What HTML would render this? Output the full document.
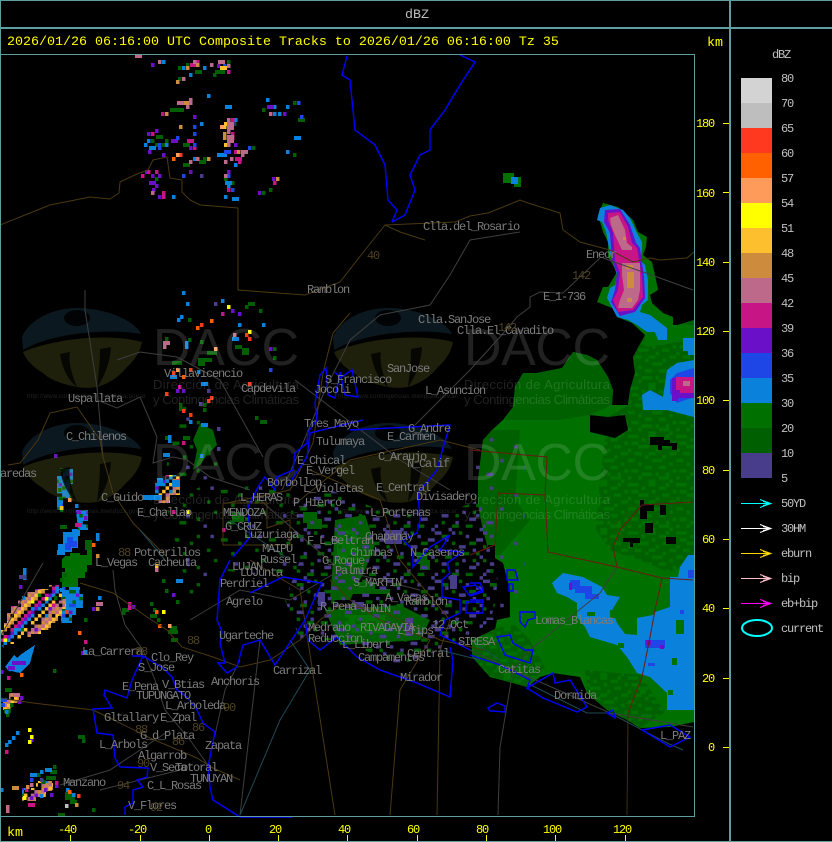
<!DOCTYPE html>
<html><head><meta charset="utf-8"><title>dBZ</title>
<style>
html,body{margin:0;padding:0;background:#000;width:832px;height:842px;overflow:hidden}
svg{display:block}
text{font-family:"Liberation Mono",monospace;font-size:12px;letter-spacing:-1.2px}
.m text{fill:#7c7c7c}
.n text{fill:#4f4220}
.y text{fill:#ffff00}
.s text{fill:#c0c0c0}
.w text{font-family:"Liberation Sans",sans-serif;letter-spacing:0;fill:#fff;fill-opacity:.13}
.c path{fill:none;stroke-width:4}
.l path{fill:none}
</style></head><body>
<svg width="832" height="842" viewBox="0 0 832 842" xmlns="http://www.w3.org/2000/svg">
<defs>
<pattern id="sp" width="14" height="14" patternUnits="userSpaceOnUse" patternTransform="scale(3.45)">
<path fill="none" stroke="#483d8b" d="M0 .5h2M5 .5h1M9 1.5h1M3 2.5h1M12 2.5h2M7 4.5h2M1 5.5h1M11 5.5h1M4 6.5h1M13 7.5h1M8 8.5h1M2 9.5h2M10 10.5h2M6 11.5h1M0 12.5h1M4 13.5h1M13 13.5h1"/>
<path fill="none" stroke="#005f00" d="M2 1.5h2M7 .5h1M10 3.5h2M5 3.5h1M0 4.5h1M8 6.5h2M12 6.5h1M3 7.5h2M6 9.5h1M11 8.5h1M0 8.5h1M9 12.5h2M2 11.5h1M5 12.5h2"/>
</pattern>
<pattern id="gs" width="14" height="14" patternUnits="userSpaceOnUse" patternTransform="scale(3.45)">
<path fill="none" stroke="#005f00" d="M1 1.5h1M8 2.5h2M4 5.5h1M11 6.5h1M6 8.5h1M1 10.5h1M10 11.5h2M13 3.5h1"/>
<path fill="none" stroke="#483d8b" d="M5 1.5h1M12 9.5h1M3 12.5h1"/>
</pattern>
<pattern id="g1" width="14" height="14" patternUnits="userSpaceOnUse" patternTransform="scale(3.45)">
<path fill="none" stroke="#007000" d="M0 .5h3M6 .5h2M11 .5h1M4 1.5h1M9 1.5h2M1 2.5h2M7 2.5h1M13 2.5h1M3 3.5h3M10 3.5h2M0 4.5h1M8 4.5h1M2 5.5h2M6 5.5h2M12 5.5h2M5 6.5h1M10 6.5h1M0 7.5h2M7 7.5h3M3 8.5h1M12 8.5h1M5 9.5h2M9 9.5h2M1 10.5h2M13 10.5h1M4 11.5h3M8 11.5h1M11 11.5h1M0 12.5h1M3 12.5h1M9 12.5h3M6 13.5h2M12 13.5h1"/>
</pattern>
<pattern id="pu" width="14" height="14" patternUnits="userSpaceOnUse" patternTransform="scale(3.45)">
<path fill="none" stroke="#483d8b" d="M2 1.5h1M9 3.5h1M5 7.5h1M12 9.5h1M1 11.5h2"/>
</pattern>
<pattern id="mix" width="12" height="12" patternUnits="userSpaceOnUse" patternTransform="scale(3.45)">
<g fill="none" shape-rendering="crispEdges">
<path stroke="#cd8b3e" d="M0 .5h1M1 11.5h1M2 10.5h1M3 9.5h1M4 8.5h1M5 7.5h1M6 6.5h1M7 5.5h1M8 4.5h1M9 3.5h1M10 2.5h1M11 1.5h1M0 3.5h1M1 2.5h1M2 1.5h1M3 .5h1M4 11.5h1M5 10.5h1M6 9.5h1M7 8.5h1M8 7.5h1M9 6.5h1M10 5.5h1M11 4.5h1"/>
<path stroke="#bd698a" d="M0 1.5h1M1 .5h1M2 11.5h1M3 10.5h1M4 9.5h1M5 8.5h1M6 7.5h1M7 6.5h1M8 5.5h1M9 4.5h1M10 3.5h1M11 2.5h1M0 11.5h1M1 10.5h1M2 9.5h1M3 8.5h1M4 7.5h1M5 6.5h1M6 5.5h1M7 4.5h1M8 3.5h1M9 2.5h1M10 1.5h1M11 .5h1"/>
<path stroke="#fdbf2d" d="M0 2.5h1M1 1.5h1M2 .5h1M3 11.5h1M4 10.5h1M5 9.5h1M6 8.5h1M7 7.5h1M8 6.5h1M9 5.5h1M10 4.5h1M11 3.5h1M0 9.5h1M1 8.5h1M2 7.5h1M3 6.5h1M4 5.5h1M5 4.5h1M6 3.5h1M7 2.5h1M8 1.5h1M9 .5h1M10 11.5h1M11 10.5h1"/>
<path stroke="#c71585" d="M0 5.5h1M1 4.5h1M2 3.5h1M3 2.5h1M4 1.5h1M5 .5h1M6 11.5h1M7 10.5h1M8 9.5h1M9 8.5h1M10 7.5h1M11 6.5h1M3 7.5h1M8 10.5h1"/>
<path stroke="#6a10c8" d="M0 6.5h1M1 5.5h1M2 4.5h1M3 3.5h1M4 2.5h1M5 1.5h1M6 .5h1M7 11.5h1M8 10.5h1M9 9.5h1M10 8.5h1M11 7.5h1M10 2.5h1M2 8.5h1"/>
<path stroke="#0a82dc" d="M0 7.5h1M1 6.5h1M2 5.5h1M3 4.5h1M4 3.5h1M5 2.5h1M6 1.5h1M7 .5h1M8 11.5h1M9 10.5h1M10 9.5h1M11 8.5h1M4 2.5h1M9 8.500h1M1 10.5h1"/>
<path stroke="#000" d="M2 3.5h1M8 1.5h1M5 7.5h1M10 9.5h1M3 10.5h1M7 4.5h1M0 6.5h1M11 .5h1M4 5.5h1"/>
<path stroke="#ffff00" d="M1 5.5h1M9 6.5h1"/>
<path stroke="#007000" d="M6 2.5h1M11 4.5h1"/>
</g>
</pattern>
<pattern id="bg" width="8" height="8" patternUnits="userSpaceOnUse" patternTransform="scale(3.45)">
<rect width="8" height="8" fill="#0a82dc"/>
<path fill="none" stroke="#005f00" d="M1 .5h2M6 1.500h1M0 3.500h1M4 3.500h2M2 5.500h1M7 5.500h1M5 6.500h1"/>
<path fill="none" stroke="#6a10c8" d="M4 1.500h1M1 4.500h1M6 4.500h1"/>
<path fill="none" stroke="#000" d="M3 2.500h1M7 3.500h1M0 7.500h2"/>
<path fill="none" stroke="#1e46e6" d="M2 2.500h1M4 7.500h2"/>
</pattern>
<g id="logo">
<path fill="#3c78a0" fill-opacity=".2" d="M22 337C30 318 55 308 77 308C108 308 136 322 141 334C115 329 55 331 23 350Z"/>
<path fill="#96a03c" fill-opacity=".2" d="M23 352C50 340 105 332 142 342C140 352 135 360 127 367C118 378 108 384 97 387C90 388 84 388 77 387C62 384 50 380 43 373C33 367 26 360 23 352Z"/>
<ellipse cx="77" cy="318" rx="13" ry="8" fill="#000" fill-opacity=".85"/>
<path fill="#000" fill-opacity=".8" d="M60 354C62 368 68 380 77 387C72 375 68 362 70 352ZM100 349C100 365 98 378 97 387C105 376 110 362 111 347Z"/>
</g>
</defs>
<rect width="832" height="842" fill="#000"/>

<!-- radar big shapes -->
<g>
<path fill="#007000" d="M645 335L694 320V722L670 727L640 728L627 720L607 710L587 693L580 677L553 673L540 677L527 687L513 683L490 677L472 657V640L495 630L497 620L510 617L510 590L503 563L490 555L483 530L478 505L478 480L483 440L492 430L503 420L513 407L515 387L523 373L537 373L562 368L573 352L587 355L597 360L608 377L613 390L612 405L628 405L630 390L635 373L633 357Z"/>
<path fill="#006000" d="M523 373L537 373L562 368L573 352L587 355L597 360L608 377L613 390L612 405L590 415L560 420L505 420L513 407L515 387Z"/>
<path fill="#006000" d="M645 335L694 320V562L668 572L640 560L610 550L596 530L600 480L608 417L628 405L630 390L635 373L633 357Z"/>
<path fill="url(#g1)" d="M645 335L694 320V562L668 572L640 560L610 550L596 530L600 480L608 417L628 405L630 390L635 373L633 357Z"/>
<path fill="#006000" d="M472 640L497 628L515 625L530 640L545 668L527 687L513 683L490 677L472 657Z"/>
<path fill="url(#g1)" d="M472 640L497 628L515 625L530 640L545 668L527 687L513 683L490 677L472 657Z"/>
<path fill="#006000" d="M585 670L640 675L665 712L640 728L627 720L607 710L587 693Z"/>
<path fill="url(#g1)" d="M585 670L640 675L665 712L640 728L627 720L607 710L587 693Z"/>
<path fill="#006000" d="M483 440L492 430L520 430L515 500L530 520L500 555L490 555L483 530L478 505L478 480Z"/>
<path fill="url(#pu)" d="M470 430H525V620H470Z"/>
<!-- holes -->
<path fill="#000" d="M608 417L625 415L628 430L615 438L590 432L590 415ZM650 437h14v3h6v3h7v7h-5v-4h-10v4h-4v-5h-8ZM640 500h4v4h10v7h-7v8h-7ZM645 523h8v10h-8ZM623 538h17v5h-7v4h-3v-5h-7ZM666 537h10v7h-10ZM660 505h6v10h-6ZM488 545h7v14h-7Z"/>
<!-- north storm -->
<path fill="#007000" d="M603 203L618 207L627 215L633 220L638 232L647 237L646 247L643 255L652 262L655 275L658 290L650 295L652 303L663 313L673 317L673 325L694 325V340L645 347L645 335L632 323L617 317L617 310L597 302L603 287L608 287L617 272L608 257L608 242L603 232L598 215Z"/>
<path fill="#0a82dc" d="M600 208L610 205L623 210L630 218L637 233L642 242L642 250L640 260L645 265L648 280L648 300L642 305L640 312L650 315L667 328L667 340L658 340L655 332L647 332L637 325L628 320L617 317L607 298L610 288L615 285L617 275L611 257L608 243L606 232L602 222L597 220Z"/>
<path fill="#6a10c8" d="M605 210L620 209L630 225L636 243L640 248L644 277L645 298L635 312L620 316L611 302L615 290L617 273L612 260L610 233L604 222Z"/>
<path fill="#c71585" d="M608 213L620 212L628 227L632 243L637 248L642 277L643 297L633 310L618 312L613 300L618 290L620 273L615 260L613 233L608 220Z"/>
<path fill="#bd698a" d="M610 218L618 215L625 230L627 243L632 247L632 250L622 250L615 235L611 225ZM622 263L640 263L640 290L638 300L632 308L618 308L620 300L624 290L622 275Z"/>
<path fill="#cd8b3e" d="M626 265h7v4h-7ZM627 272h7v16h-7ZM627 298h5v4h-5ZM623 237h3v3h-3Z"/>
<path fill="#0a82dc" d="M642 395L650 390L663 397L667 370L677 363L694 360V417L667 410L643 410ZM683 338h11v17h-6v-4h-5Z"/>
<path fill="#1e46e6" d="M670 380L677 373L694 368V397L677 403L670 393Z"/>
<path fill="#6a10c8" d="M672 378h22v20h-16v3h-6Z"/>
<path fill="#c71585" d="M676 377h18v16h-14v-3h-4Z"/>
<path fill="#bd698a" d="M683 381h7v5h-7Z"/>
<!-- south blue -->
<path fill="#0a82dc" d="M552 583L563 573L583 577L602 587L607 595L620 597L612 610L617 623L625 634L637 635L637 618L653 615L655 612L670 607V577H678L680 567L688 555H694V710H667V693L650 677L637 673L627 657L617 645L600 640L590 637L585 627L577 617V603L567 597L557 593Z"/>
<path fill="#007000" d="M610 610h7v8h-7ZM676 620h8v14h-8ZM672 658h5v7h-5ZM618 643h6v5h-6ZM587 612h8v4h-8ZM668 690h5v5h-5ZM640 690h6v4h-6Z"/>
<path fill="#1e46e6" d="M570 580h10v6h12v8h7v5h-14v-6h-10v-4h-5ZM645 640h20v8h-20ZM688 570h6v8h-6ZM680 610h4v4h-4ZM648 663h7v3h-7Z"/>
<path fill="#6a10c8" d="M569 583h3v7h-3ZM646 640h5v5h-5ZM660 645h4v4h-4Z"/>
<path fill="#007000" d="M503 173h11v4h7v10h-7v-4h-11Z"/>
<path fill="#0a82dc" d="M511 177h7v7h-7Z"/>
</g>

<!-- central speckle -->
<path fill="url(#gs)" d="M165 500L220 480L290 490L300 580L220 570L190 600L180 560Z"/>
<path fill="url(#gs)" d="M170 400L215 420L225 470L165 500Z"/>
<path fill="#005f00" d="M335 520L365 515L375 545L365 570L350 600L330 600L333 560ZM325 610L400 605L430 620L420 640L340 645ZM303 512h14v7h5v10h-15v-6h-4ZM417 553h10v7h3v10h-10v-6h-3ZM200 424L213 430L217 445L207 455L200 465L193 470L197 450L193 440ZM232 512h12v10h-12ZM345 582h30v7h15v5h-45Z"/>
<path fill="#007000" d="M337 530h20v30h-20ZM345 615h40v18h-40Z"/>
<path fill="url(#sp)" d="M290 505L330 490L380 510L440 515L480 500L500 590L490 620L470 640L440 650L400 665L340 640L300 640L285 600L300 560Z"/>
<path fill="#483d8b" d="M385 530h17v14h-17ZM354 602h10v7h-10ZM405 618h8v18h-8ZM450 575h7v14h-7ZM318 592h7v14h-7ZM345 605h7v3h-7Z"/>

<!-- mixed storms -->
<g shape-rendering="crispEdges">
<path fill="url(#bg)" d="M62 587h18v7h3v14h-7v7h-4v8h-11Z"/>
<path fill="url(#mix)" d="M0 637v-7h4v-7h3v-10h4v-7h7v-7h7v-7h10v-3h14v-4h10v4h3v10h4v10h-4v7h-4v7h-7v7h-10v4h-10v3h-10v3h-7v4h-7v4h-4Z"/>
<path fill="url(#mix)" d="M155 480h10v-5h15v20h-10v8h-20v-8h5Z"/>
<path fill="#0a82dc" d="M143 495H162V500H143ZM157 478h6v8h-6ZM172 480h8v7h-8ZM7 670L20 655L35 645L30 663L20 673ZM5 667L14 655L20 660L10 672Z"/>
<path fill="url(#bg)" d="M57 476h6v-7h10v15h-3v14h-7v12h-6Z"/>
<path fill="#0a82dc" d="M63 532h9v-3h8v7h-2v12h-6v4h-7v3h-8v-5h1v-6h5Z"/>
<path fill="#1e46e6" d="M67 537h6v4h4v6h-6v3h-6v-7h2Z"/>
<path fill="url(#bg)" d="M76 510H88V530H78Z"/>
<path fill="#007000" d="M65 556h5v-3h10v2h7v-5h5v15h-5v7h-2v6h-7v9h-16v-15h3v-4h-3v-9Z"/>
<path fill="#005f00" d="M85 540h7v10h-7ZM60 525h7v4h-7Z"/>
<path fill="url(#mix)" d="M22 788h14v-7h17v10h-7v6h-10v4h-14ZM3 700h6v-7h10v10h-7v7h-9Z"/>
</g>

<!-- scattered cells -->
<g class="c" shape-rendering="crispEdges">
<path stroke="#005f00" d="M227 62h3.5M186 65h3.5M178 68h3.5M195 72h7M215 72h10M213 75h3.5M178 79h3.5M170 110h14M293 103h3.5M262 110h3.5M298 120h7M233 124h3.5M156 137h7M151 141h3.5M165 141h3.5M155 145h3.5M162 145h3.5M183 145h7M252 148h3.5M293 155h3.5M183 165h7M199 162h7M203 159h3.5M155 179h3.5M224 179h3.5M231 183h3.5M269 190h3.5M262 193h3.5M188 320h3.5M248 304h7M245 307h3.5M259 311h3.5M165 339h3.5M188 340h3.5M242 350h7M242 353h7M235 347h7M207 353h10M200 342h3.5M273 358h3.5M273 349h3.5M172 363h10M198 360h14M198 364h7M179 405h3.5M179 409h3.5M203 405h3.5M203 410h3.5M255 418h3.5M260 422h7M183 438h7M165 438h3.5M203 437h3.5M60 470h3.5M64 480h3.5M58 490h3.5M70 495h3.5M60 510h3.5M54 598h3.5M84 620h3.5M170 628h7M168 632h10M171 640h7M150 604h3.5M153 610h3.5M150 616h7M157 620h3.5M165 591h3.5M176 602h3.5M162 581h3.5M53 671h3.5M122 610h7M122 613h3.5M78 737h7M82 741h3.5M6 715h3.5M4 711h7M10 705h3.5M5 690h7M53 767h3.5M50 772h7M37 775h3.5M46 778h10M42 782h3.5M65 794h7M65 798h10M70 802h7M58 815h7M92 810h3.5M60 580h3.5M63 575h3.5"/>
<path stroke="#0a82dc" d="M162 62h3.5M182 68h3.5M203 68h3.5M189 75h3.5M207 96h3.5M266 100h3.5M225 107h7M273 107h3.5M286 107h3.5M273 114h3.5M278 114h3.5M234 120h3.5M200 124h3.5M294 138h7M147 141h3.5M144 145h3.5M149 148h7M165 145h3.5M217 155h10M286 152h3.5M234 165h3.5M193 159h3.5M225 183h7M227 187h3.5M224 197h3.5M232 199h7M172 197h3.5M177 320h3.5M180 317h3.5M221 301h3.5M238 325h3.5M262 325h3.5M232 339h7M185 343h3.5M185 347h3.5M201 384h7M197 372h3.5M170 377h7M168 437h3.5M168 441h3.5M189 422h3.5M201 425h7M163 455h7M200 456h3.5M182 293h3.5M186 304h3.5M75 506h3.5M98 598h3.5M176 581h7M84 652h3.5M60 590h3.5M22 598h3.5M5 712h3.5M5 745h3.5M8 742h3.5M12 738h3.5M16 733h3.5M30 775h7M40 796h3.5M66 790h3.5M72 795h3.5M40 772h3.5M45 770h7M0 790h3.5M96 535h3.5M96 539h3.5M23 570h3.5M23 574h3.5M23 578h3.5"/>
<path stroke="#6a10c8" d="M151 65h3.5M217 66h3.5M193 117h3.5M231 124h3.5M155 131h3.5M147 134h3.5M171 141h7M234 145h3.5M189 148h3.5M148 152h3.5M162 155h3.5M145 172h3.5M151 176h3.5M158 176h3.5M189 172h3.5M227 172h3.5M149 183h7M155 186h3.5M152 190h3.5M158 197h3.5M258 193h3.5M272 179h3.5M267 107h7M283 114h3.5M231 311h3.5M238 314h3.5M269 349h3.5M182 391h3.5M176 391h3.5M54 456h3.5M172 595h3.5M92 609h3.5M132 607h3.5M81 653h3.5M78 512h3.5M84 518h3.5M12 663h14M8 668h7M0 672h3.5M18 702h3.5M20 698h3.5M30 740h3.5M50 795h3.5M44 790h3.5M30 798h3.5M55 786h3.5M19 587h3.5"/>
<path stroke="#c71585" d="M190 65h7M196 62h3.5M227 72h3.5M161 114h3.5M187 141h7M231 120h3.5M231 134h3.5M231 138h3.5M151 134h3.5M193 148h3.5M234 152h3.5M235 159h7M238 162h3.5M147 172h3.5M155 172h3.5M141 176h3.5M162 193h3.5M162 197h3.5M227 190h3.5M273 183h3.5M221 314h3.5M178 387h3.5M182 443h3.5M172 512h3.5M128 604h3.5M128 608h3.5M84 642h3.5M75 525h7M222 530h3.5M7 678h3.5M5 752h3.5M28 805h7M55 783h3.5M25 790h3.5"/>
<path stroke="#1e46e6" d="M223 66h3.5M297 103h3.5M300 117h3.5M193 127h3.5M193 134h3.5M176 138h3.5M158 145h3.5M158 148h3.5M193 145h3.5M248 148h3.5M224 152h7M182 176h3.5M227 176h3.5M231 190h3.5M269 370h3.5M0 700h7M0 705h5M30 780h3.5"/>
<path stroke="#cd8b3e" d="M176 82h3.5M196 65h3.5M186 68h3.5M183 103h7M165 114h3.5M179 127h3.5M223 134h3.5M223 138h3.5M237 152h3.5M207 159h3.5M276 179h3.5M96 609h3.5M75 805h3.5M12 788h7M26 787h3.5M96 556h3.5"/>
<path stroke="#fdbf2d" d="M220 68h7M224 124h3.5M224 145h3.5M223 127h3.5M60 508h3.5M155 566h3.5"/>
<path stroke="#ffff00" d="M227 307h3.5M248 332h3.5M186 512h3.5M162 612h3.5M28 742h3.5M30 737h3.5M28 730h3.5M23 798h3.5"/>
<path stroke="#bd698a" d="M135 56h7M158 62h3.5M193 62h3.5M218 62h7M210 65h3.5M227 66h3.5M182 79h3.5M177 103h7M189 100h3.5M189 103h3.5M186 107h3.5M269 114h3.5M227 120h3.5M227 124h7M227 128h7M227 132h3.5M227 137h7M227 141h7M227 145h3.5M241 152h7M241 155h3.5M196 159h3.5M189 162h3.5M224 162h3.5M230 159h3.5M224 176h3.5M151 193h3.5M163 343h7M163 347h3.5M233 335h3.5M96 604h7M13 695h7M6 811h3.5M6 807h3.5M30 785h3.5M155 570h3.5"/>
<path stroke="#ff3820" d="M179 155h3.5M200 325h3.5M196 328h3.5M248 339h3.5M245 335h3.5M165 394h3.5M207 401h3.5M210 398h3.5M182 411h3.5M189 415h3.5M248 384h3.5M189 370h3.5M172 373h3.5M77 796h3.5M65 612h3.5"/>
<path stroke="#ff6000" d="M172 159h3.5M210 321h3.5M196 328h3.5M78 633h3.5M20 675h3.5M92 545h3.5M68 792h3.5M155 612h3.5M158 626h3.5M182 377h3.5"/>
<path stroke="#ff9c5c" d="M176 155h3.5M220 127h3.5M214 349h3.5M176 370h3.5M168 626h3.5M68 500h3.5"/>
<path stroke="#483d8b" d="M214 304h3.5M207 391h3.5M199 404h3.5M217 429h3.5M217 449h3.5M200 176h3.5M186 560h3.5M40 780h3.5M19 577h7"/>
<path stroke="#bebebe" d="M65 806h3.5"/>
</g>

<!-- watermarks -->
<use href="#logo"/><use href="#logo" x="0" y="115"/><use href="#logo" x="311"/><use href="#logo" x="311" y="115"/>
<g class="w">
<text x="153" y="365" style="font-size:52px" textLength="146">DACC</text>
<text x="153" y="480" style="font-size:52px" textLength="146">DACC</text>
<text x="464" y="365" style="font-size:52px" textLength="146">DACC</text>
<text x="464" y="480" style="font-size:52px" textLength="146">DACC</text>
<text x="153" y="389" style="font-size:13px" textLength="146">Dirección de Agricultura</text>
<text x="153" y="404" style="font-size:13px" textLength="146">y Contingencias Climáticas</text>
<text x="153" y="504" style="font-size:13px" textLength="146">Dirección de Agricultura</text>
<text x="153" y="519" style="font-size:13px" textLength="146">y Contingencias Climáticas</text>
<text x="464" y="389" style="font-size:13px" textLength="146">Dirección de Agricultura</text>
<text x="464" y="404" style="font-size:13px" textLength="146">y Contingencias Climáticas</text>
<text x="464" y="504" style="font-size:13px" textLength="146">Dirección de Agricultura</text>
<text x="464" y="519" style="font-size:13px" textLength="146">y Contingencias Climáticas</text>
<text x="27" y="398" style="font-size:6px" textLength="119">http://www.contingencias.mendoza.gov.ar</text>
<text x="27" y="513" style="font-size:6px" textLength="119">http://www.contingencias.mendoza.gov.ar</text>
<text x="338" y="398" style="font-size:6px" textLength="119">http://www.contingencias.mendoza.gov.ar</text>
<text x="338" y="513" style="font-size:6px" textLength="119">http://www.contingencias.mendoza.gov.ar</text>
</g>

<!-- map lines -->
<g class="l">
<g stroke="#3e3e3e" stroke-width="1">
<path d="M600 258L563 293L540 292L530 297L530 307L517 317L500 337L470 370L440 400L415 425"/>
<path d="M603 258L657 277L693 290"/>
<path d="M600 593L530 650L513 670L500 747L498 815"/>
<path d="M617 567L600 593M470 650L513 670L610 713L693 727"/>
<path d="M520 232L470 240L450 275L430 305L380 315L350 340L325 390L300 450L282 490"/>
<path d="M85 290V310L97 387L103 457M117 360L140 352L177 357L220 380L263 457M97 400L117 408L140 397L157 437L153 463L173 457L187 460L210 477L250 490"/>
<path d="M0 637L43 563M113 570L115 590L125 625L143 650L155 680L165 710L190 740L210 768M215 735L225 690L240 660"/>
<path d="M295 380L400 460L450 490M260 500L340 570L420 590M190 620L240 590L290 600L340 570M260 640L240 815M170 730L110 770L60 785M180 770L100 790"/>
</g>
<g stroke="#4a3810" stroke-width="1">
<path d="M0 225L50 205L90 197L110 199L119 193L120 182L137 174L148 170L153 160L167 157L170 178L182 180L182 192L190 200L200 205L238 208V290L305 295L340 282L365 250L385 225L455 222L470 216L488 213L503 207L520 200L528 203L560 213L563 230L580 242L610 250L633 262L650 258L660 260L687 258L694 252"/>
<path d="M350 313L333 333L323 373L313 443L300 470L290 490L227 503"/>
<path d="M77 407L50 413L38 440L20 463L8 465M77 407L100 440L103 457L113 493L133 523L153 543L167 557"/>
<path d="M0 698L33 703L93 710L110 718L150 738L197 758L213 768L240 780"/>
<path d="M80 583L113 593L147 617L167 630L182 647L213 657L240 667L270 660L300 640L320 620L340 605L380 610L440 640L485 650"/>
<path d="M385 225L400 232L425 240M310 470L380 500L400 560L450 620L440 650L437 815"/>
<path d="M223 503H267V528L290 520V545H223V503ZM300 500L350 460L440 440L480 450"/>
<path d="M330 580L350 600L380 620L430 640L400 690L390 815M250 560L300 590L335 815"/>
</g>
<g stroke="#6a1a10" stroke-width="1">
<path d="M470 450L547 457L545 495L498 493L495 545L470 555M545 495L548 552L617 567L662 578L693 580M642 505L620 530L613 547L617 567M693 502L642 505M662 578L655 610L650 637L642 677L628 713"/>
</g>
<path stroke="#3d3008" d="M628 713L627 815"/>
<g stroke="#1f4a55" stroke-width="1">
<path d="M527 683L587 713L610 713L667 743L683 750M230 520L260 540L290 560M140 530L165 560M290 640L310 670L280 720L240 815M470 640L500 660M440 650L480 660"/>
</g>
<g stroke="#0000ff" stroke-width="1.4">
<path d="M347 56L342 75L350 80L355 130L375 145L385 165L388 200L397 210L392 222"/>
<path d="M460 55L475 62L460 85L445 110L430 130L430 150L420 155L410 175L415 190L405 215L392 222"/>
<path d="M315 403L317 420L308 432L307 443L295 453L293 470L277 477L275 490L265 477L258 487L248 507L250 537L233 557"/>
<path d="M315 403L320 375L326 368L328 395L335 398L340 372L345 395L358 397L352 370L340 378L335 372"/>
<path d="M132 656H143L132 680L127 698L105 690L104 695L112 708L93 709L97 733L113 735L115 758L120 767L148 768L147 777L137 780L143 787L133 790L133 803L125 807L125 815"/>
<path d="M143 656L163 668L172 677L177 690L187 697L197 710L203 723L215 732L208 767L210 787L213 800L240 817L292 817"/>
<path d="M230 560L220 580L217 620L222 632L220 643L225 663L218 663L227 673L237 667L243 645L260 640L275 665L305 620"/>
<path d="M250 593L283 577L322 583L313 602L305 620L308 640L320 650L337 637L357 657L380 670L417 683L450 697L453 660L450 647"/>
<path d="M363 420L310 433L307 457L287 487M350 430L450 425L443 448L437 470L418 493L420 520L417 533L403 540L413 550V567L430 547L450 535L440 550L463 552L447 563L450 573L442 580V597L460 600V613L445 620L440 635L470 650"/>
<path d="M470 583H480L483 590L470 595M470 600H483V613H470M507 570H515L518 580H507ZM509 584H513V591H509ZM520 612H535V618L528 620L525 627L520 622ZM497 637L510 635L513 643L525 650L533 650L530 663L505 655ZM466 602H483V613H466ZM463 587L475 585L483 592L470 596Z"/>
<path d="M470 655L500 665L530 680L527 688L553 673L555 683L570 680L587 707L577 712L543 698L527 688M642 730L670 725L690 737L670 747ZM488 708L497 703L505 706V712L490 711ZM607 713L613 710L615 718Z"/>
</g>
</g>

<!-- labels -->
<g class="m">
<text x="423" y="230">Clla.del_Rosario</text><text x="586" y="258">Eneor</text><text x="543" y="300">E_1-736</text><text x="307" y="293">Ramblon</text>
<text x="418" y="323">Clla.SanJose</text><text x="457" y="334">Clla.El_Cavadito</text><text x="164" y="377">Villavicencio</text><text x="241" y="392">Capdevila</text>
<text x="325" y="383">S_Francisco</text><text x="387" y="372">SanJose</text><text x="425" y="394">L_Asuncion</text><text x="314" y="393">Jocoli</text>
<text x="68" y="402">Uspallata</text><text x="304" y="427">Tres_Mayo</text><text x="316" y="445">Tulumaya</text><text x="408" y="432">G_Andre</text>
<text x="387" y="440">E_Carmen</text><text x="378" y="460">C_Araujo</text><text x="407" y="467">N_Calif</text><text x="297" y="464">E_Chical</text>
<text x="306" y="474">E_Vergel</text><text x="267" y="486">Borbollon</text><text x="376" y="491">E_Central</text><text x="416" y="500">Divisadero</text>
<text x="303" y="492">L_Violetas</text><text x="240" y="501">L_HERAS</text><text x="293" y="506">P_Hierro</text><text x="66" y="440">C_Chilenos</text>
<text x="0" y="477">aredas</text><text x="101" y="501">C_Guido</text><text x="137" y="516">E_Challao</text><text x="223" y="516">MENDOZA</text>
<text x="225" y="530">G_CRUZ</text><text x="244" y="538">Luzuriaga</text><text x="370" y="516">L_Portenas</text><text x="365" y="540">Chapanay</text>
<text x="307" y="544">F_L_Beltran</text><text x="350" y="556">Chimbas</text><text x="410" y="556">N_Caseros</text><text x="262" y="552">MAIPU</text>
<text x="260" y="563">Russel</text><text x="134" y="556">Potrerillos</text><text x="95" y="566">L_Vegas</text><text x="148" y="566">Cacheuta</text>
<text x="232" y="570">LUJAN</text><text x="240" y="576">LUJunta</text><text x="322" y="564">G_Roque</text><text x="335" y="574">Palmira</text>
<text x="353" y="586">S_MARTIN</text><text x="220" y="587">Perdriel</text><text x="385" y="601">A_Vacas</text><text x="405" y="605">Ramblon</text>
<text x="226" y="605">Agrelo</text><text x="320" y="610">R_Pena</text><text x="360" y="612">JUNIN</text><text x="308" y="631">Medrano</text>
<text x="360" y="631">RIVADAVIA</text><text x="397" y="634">L_Tips</text><text x="432" y="628">12_Oct</text><text x="308" y="642">Reduccion</text>
<text x="219" y="639">Ugarteche</text><text x="342" y="648">L_Libert</text><text x="407" y="657">Central</text><text x="358" y="661">Campamentos</text>
<text x="273" y="674">Carrizal</text><text x="400" y="681">Mirador</text><text x="458" y="645">SIRESA</text><text x="535" y="624">Lomas_Blancas</text>
<text x="498" y="673">Catitas</text><text x="554" y="699">Dormida</text><text x="660" y="739">L_PAZ</text><text x="82" y="655">La_Carrera</text>
<text x="151" y="661">Clo_Rey</text><text x="138" y="671">S_Jose</text><text x="162" y="688">V_Btias</text><text x="211" y="685">Anchoris</text>
<text x="122" y="690">E_Pena</text><text x="136" y="699">TUPUNGATO</text><text x="165" y="709">L_Arboleda</text><text x="104" y="721">Gltallary</text>
<text x="160" y="721">E_Zpal</text><text x="140" y="739">G_d_Plata</text><text x="99" y="748">L_Arbols</text><text x="205" y="749">Zapata</text>
<text x="138" y="759">Algarrob</text><text x="150" y="771">V_Seca</text><text x="175" y="771">Totoral</text><text x="190" y="782">TUNUYAN</text>
<text x="147" y="789">C_L_Rosas</text><text x="63" y="786">Manzano</text><text x="128" y="809">V_Flores</text>
</g>
<g class="n">
<text x="572" y="279">142</text><text x="498" y="331">142</text><text x="367" y="259">40</text><text x="118" y="556">88</text><text x="187" y="644">88</text>
<text x="135" y="655">88</text><text x="223" y="711">90</text><text x="135" y="733">88</text><text x="172" y="745">86</text><text x="137" y="767">90</text><text x="117" y="789">94</text><text x="150" y="811">92</text><text x="192" y="731">86</text>
</g>

<!-- frame -->
<g fill="#5f9ea0" shape-rendering="crispEdges">
<rect width="832" height="1"/><rect y="27" width="832" height="2"/><rect y="54" width="695" height="1"/><rect y="816" width="695" height="1"/>
<rect y="841" width="832" height="1"/><rect width="1" height="842"/><rect x="694" y="54" width="1" height="763"/><rect x="729" width="2" height="842"/>
</g>

<!-- header -->
<text x="405" y="18" style="font-size:13.33px;letter-spacing:0;fill:#bdbdbd">dBZ</text>
<text x="7" y="45" style="font-size:13.33px;letter-spacing:0;fill:#ffff00">2026/01/26 06:16:00 UTC Composite Tracks to 2026/01/26 06:16:00 Tz 35</text>

<!-- axes -->
<g class="y">
<text x="707" y="46" style="font-size:13.33px;letter-spacing:0">km</text>
<text x="7" y="836" style="font-size:13.33px;letter-spacing:0">km</text>
<text x="696" y="127">180</text><text x="696" y="197">160</text><text x="696" y="266">140</text><text x="696" y="335">120</text><text x="696" y="404">100</text>
<text x="702" y="474">80</text><text x="702" y="543">60</text><text x="702" y="612">40</text><text x="702" y="682">20</text><text x="708" y="751">0</text>
<text x="58" y="833">-40</text><text x="128" y="833">-20</text><text x="205" y="833">0</text><text x="269" y="833">20</text><text x="338" y="833">40</text><text x="407" y="833">60</text><text x="476" y="833">80</text><text x="543" y="833">100</text><text x="613" y="833">120</text>
</g>
<path stroke="#ffff00" fill="none" shape-rendering="crispEdges" d="M723 123.500h6M723 192.500h6M723 262.500h6M723 331.500h6M723 400.500h6M723 470.500h6M723 539.500h6M723 608.500h6M723 678.500h6M723 747.500h6M70.500 835v6M140.500 835v6M209.500 835v6M278.500 835v6M347.500 835v6M417.500 835v6M486.500 835v6M555.500 835v6M625.500 835v6"/>

<!-- colorbar -->
<g shape-rendering="crispEdges">
<rect x="741" y="78" width="31" height="25" fill="#d3d3d3"/><rect x="741" y="103" width="31" height="25" fill="#bebebe"/><rect x="741" y="128" width="31" height="25" fill="#ff3820"/><rect x="741" y="153" width="31" height="25" fill="#ff6000"/>
<rect x="741" y="178" width="31" height="25" fill="#fe9a5a"/><rect x="741" y="203" width="31" height="25" fill="#ffff00"/><rect x="741" y="228" width="31" height="25" fill="#fdbf2d"/><rect x="741" y="253" width="31" height="25" fill="#cd8b3e"/>
<rect x="741" y="278" width="31" height="25" fill="#bd698a"/><rect x="741" y="303" width="31" height="25" fill="#c71585"/><rect x="741" y="328" width="31" height="25" fill="#6a10c8"/><rect x="741" y="353" width="31" height="25" fill="#1e46e6"/>
<rect x="741" y="378" width="31" height="25" fill="#0a82dc"/><rect x="741" y="403" width="31" height="25" fill="#007000"/><rect x="741" y="428" width="31" height="25" fill="#005f00"/><rect x="741" y="453" width="31" height="25" fill="#483d8b"/>
</g>
<g class="s">
<text x="772" y="58">dBZ</text>
<text x="781" y="82">80</text><text x="781" y="107">70</text><text x="781" y="132">65</text><text x="781" y="157">60</text><text x="781" y="182">57</text><text x="781" y="207">54</text><text x="781" y="232">51</text><text x="781" y="257">48</text><text x="781" y="282">45</text>
<text x="781" y="307">42</text><text x="781" y="332">39</text><text x="781" y="357">36</text><text x="781" y="382">35</text><text x="781" y="407">30</text><text x="781" y="432">20</text><text x="781" y="457">10</text><text x="781" y="482">5</text>
<text x="781" y="507">50YD</text><text x="781" y="532">30HM</text><text x="781" y="557">eburn</text><text x="781" y="582">bip</text><text x="781" y="607">eb+bip</text><text x="781" y="632">current</text>
</g>
<g fill="none" stroke-width="1">
<path stroke="#00ffff" d="M741 503.500H771M760 499.500L771 503.500L760 507.500M763 501.500L771 503.500L763 505.500"/>
<path stroke="#ffffff" d="M741 528.500H771M760 524.500L771 528.500L760 532.500M763 526.500L771 528.500L763 530.500"/>
<path stroke="#ffd700" d="M741 553.500H771M760 549.500L771 553.500L760 557.500M763 551.500L771 553.500L763 555.500"/>
<path stroke="#ffc0cb" d="M741 578.500H771M760 574.500L771 578.500L760 582.500M763 576.500L771 578.500L763 580.500"/>
<path stroke="#ff00ff" d="M741 603.500H771M760 599.500L771 603.500L760 607.500M763 601.500L771 603.500L763 605.500"/>
</g>
<ellipse cx="757" cy="628" rx="15" ry="8" fill="none" stroke="#00ffff" stroke-width="2"/>
</svg>
</body></html>
